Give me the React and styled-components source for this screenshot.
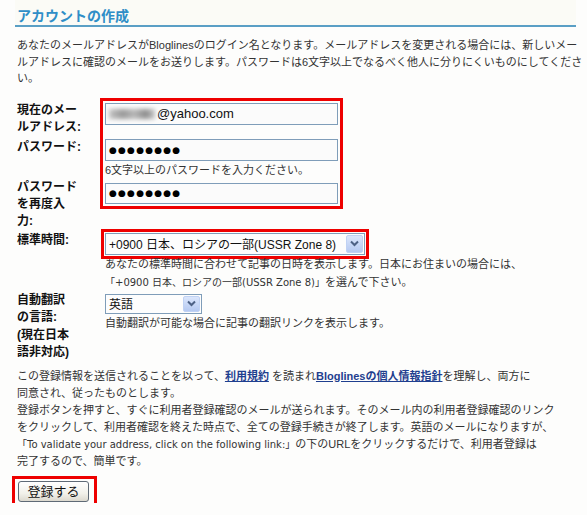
import React from "react";
import styled, { createGlobalStyle } from "styled-components";

const GlobalStyle = createGlobalStyle`
  body {
    margin: 0;
    background: #fdfdfc;
    font-family: "Liberation Sans", "Noto Sans CJK JP", sans-serif;
    color: #333;
  }
`;

const Page = styled.div`
  width: 587px;
  padding: 0 0 0 17px;
  box-sizing: border-box;
  font-size: 11px;
`;

const Header = styled.h1`
  margin: 0 11px 0 -2px;
  padding: 8px 0 0 2px;
  font-size: 14px;
  line-height: 17px;
  font-weight: bold;
  color: #2f8ec7;
  border-bottom: 2px solid #5a9fc5;
  background: #fbfbf6;
`;

const Intro = styled.p`
  margin: 10px 0 0;
  line-height: 16.5px;
  white-space: nowrap;
`;

const Group = styled.div`
  display: flex;
  align-items: flex-start;
  margin-top: ${(p) => p.$top || 0}px;
`;

const LabelCol = styled.div`
  width: 88px;
  flex: none;
  display: flex;
  flex-direction: column;
  padding-top: ${(p) => p.$pad || 0}px;
`;

const Label = styled.div`
  font-size: 12px;
  font-weight: bold;
  color: #111;
  line-height: ${(p) => p.$lh || 17}px;
  margin-top: ${(p) => p.$top || 0}px;
`;

const FieldCol = styled.div`
  display: flex;
  flex-direction: column;
  padding-top: ${(p) => p.$pad || 0}px;
`;

const RedMark = styled.div`
  outline: 3px solid #ee0000;
  outline-offset: ${(p) => p.$offset || 0}px;
  display: flex;
  flex-direction: column;
  align-self: flex-start;
`;

const Field = styled.div`
  width: 233px;
  height: ${(p) => p.$h || 22}px;
  box-sizing: border-box;
  margin-top: ${(p) => p.$top || 0}px;
  border: 1px solid #7f9db9;
  background: #fbfbfb;
  display: flex;
  align-items: center;
  padding-left: 3px;
  font-size: 13px;
  color: #111;
`;

const Smear = styled.span`
  display: inline-block;
  width: 46px;
  height: 10px;
  margin-right: 2px;
  background: linear-gradient(90deg, #c4c4c4, #9a9a9a 30%, #b8b8b8 55%, #8e8e8e 80%, #c8c8c8);
  filter: blur(2px);
`;

const Dots = styled.span`
  font-family: "DejaVu Sans", sans-serif;
  font-size: 9px;
  letter-spacing: 1.2px;
  color: #000;
`;

const Hint = styled.div`
  line-height: 18px;
  color: #333;
`;

const Select = styled.div`
  width: ${(p) => p.$w}px;
  height: ${(p) => p.$h}px;
  box-sizing: border-box;
  border: 1px solid #7f9db9;
  background: #fdfdfd;
  display: flex;
  align-items: center;
  padding: 1px 1px 1px 3px;
  font-size: 12px;
  color: #111;
`;

const SelectText = styled.span`
  flex: 1;
  white-space: nowrap;
  overflow: hidden;
`;

const DropBtn = styled.span`
  width: 15px;
  flex: none;
  align-self: stretch;
  border: 1px solid #c0d2f4;
  border-radius: 2px;
  background: linear-gradient(#dbe6fc, #b5c9f1);
  display: flex;
  align-items: center;
  justify-content: center;
`;

const Desc = styled.div`
  line-height: 18px;
  white-space: nowrap;
`;

const Wide = styled.span`
  font-family: "DejaVu Sans", "Noto Sans CJK JP", sans-serif;
  font-size: 10px;
`;

const Notice = styled.p`
  margin: 6px 0 0;
  line-height: 17px;
  white-space: nowrap;
`;

const Link = styled.a`
  color: #1f3f8f;
  font-weight: bold;
  text-decoration: underline;
`;

const ButtonWrap = styled.div`
  margin-top: 11px;
  padding: 0 3px 1px 1px;
  display: inline-block;
  outline: 3px solid #ee0000;
  outline-offset: 2px;
`;

const Button = styled.button`
  width: 71px;
  height: 21px;
  padding: 0;
  border: 1px solid #5f6a76;
  border-radius: 3px;
  background: linear-gradient(#ffffff, #f2f1ea 60%, #dcd9cf);
  font-family: "Noto Sans CJK JP", sans-serif;
  font-size: 13px;
  line-height: 18px;
  color: #111;
`;

const Chevron = () => (
  <svg width="9" height="7" viewBox="0 0 9 7">
    <polyline points="1,1.5 4.5,5 8,1.5" fill="none" stroke="#4d6185" strokeWidth="2" />
  </svg>
);

export default function App() {
  return (
    <Page>
      <GlobalStyle />
      <Header>アカウントの作成</Header>
      <Intro>
        あなたのメールアドレスがBloglinesのログイン名となります。メールアドレスを変更される場合には、新しいメー
        <br />
        ルアドレスに確認のメールをお送りします。パスワードは6文字以上でなるべく他人に分りにくいものにしてくださ
        <br />
        い。
      </Intro>

      <Group $top={15}>
        <LabelCol $pad={0.5}>
          <Label>
            現在のメー
            <br />
            ルアドレス:
          </Label>
          <Label $top={3}>パスワード:</Label>
          <Label $top={23}>
            パスワード
            <br />
            を再度入
            <br />
            力:
          </Label>
        </LabelCol>
        <FieldCol $pad={1}>
          <RedMark $offset={2}>
            <Field>
              <Smear />
              @yahoo.com
            </Field>
            <Field $top={14}>
              <Dots>●●●●●●●●</Dots>
            </Field>
            <Hint>6文字以上のパスワードを入力ください。</Hint>
            <Field $top={4} $h={21}>
              <Dots>●●●●●●●●</Dots>
            </Field>
          </RedMark>
        </FieldCol>
      </Group>

      <Group>
        <LabelCol $pad={2}>
          <Label>標準時間:</Label>
        </LabelCol>
        <FieldCol $pad={2.5}>
          <RedMark $offset={1}>
            <Select $w={260} $h={22}>
              <SelectText>+0900 日本、ロシアの一部(USSR Zone 8)</SelectText>
              <DropBtn>
                <Chevron />
              </DropBtn>
            </Select>
          </RedMark>
          <Desc>
            あなたの標準時間に合わせて記事の日時を表示します。日本にお住まいの場合には、
            <br />
            <Wide>「+0900 日本、ロシアの一部(USSR Zone 8)」</Wide>を選んで下さい。
          </Desc>
        </FieldCol>
      </Group>

      <Group>
        <LabelCol>
          <Label $lh={17.5}>
            自動翻訳
            <br />
            の言語:
            <br />
            (現在日本
            <br />
            語非対応)
          </Label>
        </LabelCol>
        <FieldCol $pad={2}>
          <Select $w={97} $h={20}>
            <SelectText>英語</SelectText>
            <DropBtn>
              <Chevron />
            </DropBtn>
          </Select>
          <Desc>自動翻訳が可能な場合に記事の翻訳リンクを表示します。</Desc>
        </FieldCol>
      </Group>

      <Notice>
        この登録情報を送信されることを以って、<Link href="#">利用規約</Link> を読まれ
        <Link href="#">Bloglinesの個人情報指針</Link>を理解し、両方に
        <br />
        同意され、従ったものとします。
        <br />
        登録ボタンを押すと、すぐに利用者登録確認のメールが送られます。そのメール内の利用者登録確認のリンク
        <br />
        をクリックして、利用者確認を終えた時点で、全ての登録手続きが終了します。英語のメールになりますが、
        <br />
        <Wide>「To validate your address, click on the following link:」</Wide>の下のURLをクリックするだけで、利用者登録は
        <br />
        完了するので、簡単です。
      </Notice>

      <ButtonWrap>
        <Button>登録する</Button>
      </ButtonWrap>
    </Page>
  );
}
